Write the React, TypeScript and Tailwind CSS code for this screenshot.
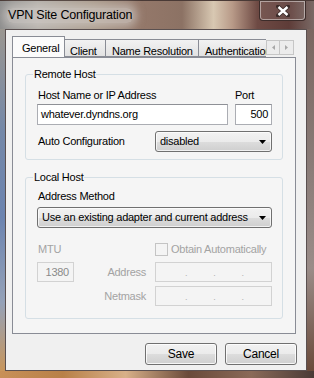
import React from 'react';

const font = "font-['Liberation_Sans',Arial,sans-serif]";

function IpField() {
  return (
    <div className="w-[117px] h-[20px] border border-[#d2d2d2] bg-[#f4f4f4] flex items-end pb-[3px] pl-[29px] gap-[26px] text-[9px] leading-[9px] text-[#b0b0b0]">
      <span>.</span>
      <span>.</span>
      <span>.</span>
    </div>
  );
}

function Combo({ value, width }: { value: string; width: string }) {
  return (
    <div
      className={`${width} h-[21px] border border-[#707070] rounded-[3px] bg-[linear-gradient(180deg,#f2f2f2_0%,#ebebeb_50%,#dddddd_51%,#cfcfcf_100%)] shadow-[inset_0_0_0_1px_rgba(255,255,255,0.7)] flex items-center justify-between pl-[4px] pr-[5px]`}
    >
      <span>{value}</span>
      <svg width="7" height="4" viewBox="0 0 7 4">
        <path d="M0 0h7L3.5 4z" fill="#000" />
      </svg>
    </div>
  );
}

function WinButton({ label }: { label: string }) {
  return (
    <button className="w-[72px] h-[22px] border border-[#707070] rounded-[3px] bg-[linear-gradient(180deg,#f2f2f2_0%,#ebebeb_50%,#dddddd_51%,#cfcfcf_100%)] shadow-[inset_0_0_0_1px_rgba(255,255,255,0.8)] text-[12px] text-black">
      {label}
    </button>
  );
}

export default function App() {
  return (
    <div className={`w-[314px] h-[378px] overflow-hidden flex flex-col ${font} text-[11px] tracking-[-0.25px] text-black bg-[#8a7a70]`}>
      {/* title bar over blurred desktop */}
      <div className="h-[29px] shrink-0 flex items-start justify-between bg-[linear-gradient(90deg,#8e8e8e_0%,#b2aea8_12%,#a89888_30%,#94786a_45%,#8c7264_58%,#d8c8b2_68%,#b89a88_74%,#6e4a44_82%,#5e3c38_92%,#7a6a66_100%)] border-t border-[#4a3a36]">
        <span className="mt-[7px] ml-[7px] px-[1px] text-[12.5px] tracking-[-0.2px] text-black rounded-[6px] bg-[rgba(215,210,205,0.55)] shadow-[0_0_8px_4px_rgba(215,210,205,0.55)] leading-[15px]">
          VPN Site Configuration
        </span>
        <div className="mr-[8px] w-[47px] h-[20px] border border-t-0 border-[#3c2c2a] rounded-b-[4px] shadow-[inset_0_0_0_1px_rgba(255,255,255,0.45)] bg-[rgba(255,255,255,0.08)] flex items-center justify-center">
          <svg width="14" height="12" viewBox="0 0 14 12">
            <path d="M2 1.5l10 9M12 1.5l-10 9" stroke="#3a2a28" strokeWidth="4" strokeLinecap="round" />
            <path d="M2.5 2l9 8M11.5 2l-9 8" stroke="#fff" strokeWidth="2.4" />
          </svg>
        </div>
      </div>

      <div className="flex h-[342px] shrink-0">
        <div className="w-[5px] shrink-0 bg-[linear-gradient(180deg,#9a9690_0%,#7488a8_30%,#6c84b0_55%,#95a2b8_80%,#c8965c_100%)]" />

        {/* client area */}
        <div className="w-[302px] shrink-0 min-w-0 border border-[#5a5050] bg-[#f0f0f0] pt-[6px] pl-[6px] pr-[9px] flex flex-col">
          {/* tab strip */}
          <div className="flex items-end h-[21px] w-[284px]">
            <div className="w-[254px] min-w-0 flex items-end overflow-hidden h-[21px]">
              <div className="relative z-10 w-[53px] h-[22px] mb-[-1px] shrink-0 border border-b-0 border-[#898c95] bg-[#fbfbfb] pl-[9px] pt-[3px]">
                General
              </div>
              <div className="w-[41px] h-[18px] shrink-0 border border-l-0 border-[#898c95] bg-[linear-gradient(180deg,#f2f2f2,#e2e2e2)] pl-[5px] pt-[3px]">
                Client
              </div>
              <div className="w-[93px] h-[18px] shrink-0 border border-l-0 border-[#898c95] bg-[linear-gradient(180deg,#f2f2f2,#e2e2e2)] pl-[6px] pt-[3px]">
                Name Resolution
              </div>
              <div className="w-[80px] h-[18px] shrink-0 border border-l-0 border-[#898c95] bg-[linear-gradient(180deg,#f2f2f2,#e2e2e2)] pl-[6px] pt-[3px] whitespace-nowrap">
                Authentication
              </div>
            </div>
            <div className="flex self-start mt-[4px]">
              <div className="w-[14px] h-[15px] border border-[#c6c6c6] bg-[#ececec] flex items-center justify-center">
                <svg width="3" height="5" viewBox="0 0 3 5"><path d="M3 0v5L0 2.5z" fill="#a8a8a8" /></svg>
              </div>
              <div className="w-[14px] h-[15px] border border-l-0 border-[#c6c6c6] bg-[#ececec] flex items-center justify-center">
                <svg width="3" height="5" viewBox="0 0 3 5"><path d="M0 0v5l3-2.5z" fill="#a8a8a8" /></svg>
              </div>
            </div>
          </div>

          {/* tab panel */}
          <div className="h-[277px] w-[284px] border border-[#898c95] bg-[#f5f5f5] px-[12px] pt-[9px]">
            <fieldset className="border border-[#d5dfe5] rounded-[3px] pl-[11px] pr-[10px] pb-[7px]">
              <legend className="ml-[-4px] px-[1px] leading-[14px]">Remote Host</legend>
              <div className="mt-[7px] flex gap-[7px] h-[14px] leading-[14px]">
                <span className="w-[191px] pl-[1px]">Host Name or IP Address</span>
                <span className="w-[37px]">Port</span>
              </div>
              <div className="mt-[2px] flex gap-[7px]">
                <div className="w-[191px] h-[21px] border border-[#abadb3] border-t-[#8e9096] bg-white pl-[3px] flex items-center">
                  whatever.dyndns.org
                </div>
                <div className="w-[37px] h-[21px] border border-[#abadb3] border-t-[#8e9096] bg-white pr-[3px] flex items-center justify-end">
                  500
                </div>
              </div>
              <div className="mt-[6px] flex items-center">
                <span className="w-[118px] pl-[1px]">Auto Configuration</span>
                <Combo value="disabled" width="w-[117px]" />
              </div>
            </fieldset>

            <fieldset className="mt-[10px] border border-[#d5dfe5] rounded-[3px] pl-[11px] pr-[10px] pb-[12px]">
              <legend className="ml-[-4px] px-[1px] leading-[14px]">Local Host</legend>
              <div className="mt-[5px] h-[14px] leading-[14px] pl-[1px]">Address Method</div>
              <div className="mt-[4px]">
                <Combo value="Use an existing adapter and current address" width="w-[235px]" />
              </div>
              <div className="mt-[14px] flex items-center h-[14px] text-[#a3a3a3]">
                <span className="w-[118px] pl-[1px]">MTU</span>
                <span className="w-[13px] h-[13px] border border-[#c4c4c4] bg-[#f4f4f4] mr-[3px]" />
                <span>Obtain Automatically</span>
              </div>
              <div className="mt-[6px] flex items-center">
                <div className="w-[37px] h-[20px] border border-[#d2d2d2] bg-[#f4f4f4] text-[#8a8a8a] pr-[4px] flex items-center justify-end">
                  1380
                </div>
                <span className="w-[72px] text-right text-[#a3a3a3]">Address</span>
                <span className="w-[9px]" />
                <IpField />
              </div>
              <div className="mt-[4px] flex items-center">
                <span className="w-[109px] text-right text-[#a3a3a3]">Netmask</span>
                <span className="w-[9px]" />
                <IpField />
              </div>
            </fieldset>
          </div>

          <div className="mt-[9px] w-[285px] flex justify-end gap-[8px]">
            <WinButton label="Save" />
            <WinButton label="Cancel" />
          </div>
        </div>

        <div className="w-[7px] shrink-0 bg-[linear-gradient(180deg,#7a6660_0%,#8a7c78_40%,#9a8c88_70%,#6a4a3a_100%)]" />
      </div>

      <div className="flex-1 bg-[linear-gradient(90deg,#c89058_0%,#b88048_20%,#d8b088_40%,#6a4a3a_60%,#8a6a58_80%,#4a3a36_100%)]" />
    </div>
  );
}
